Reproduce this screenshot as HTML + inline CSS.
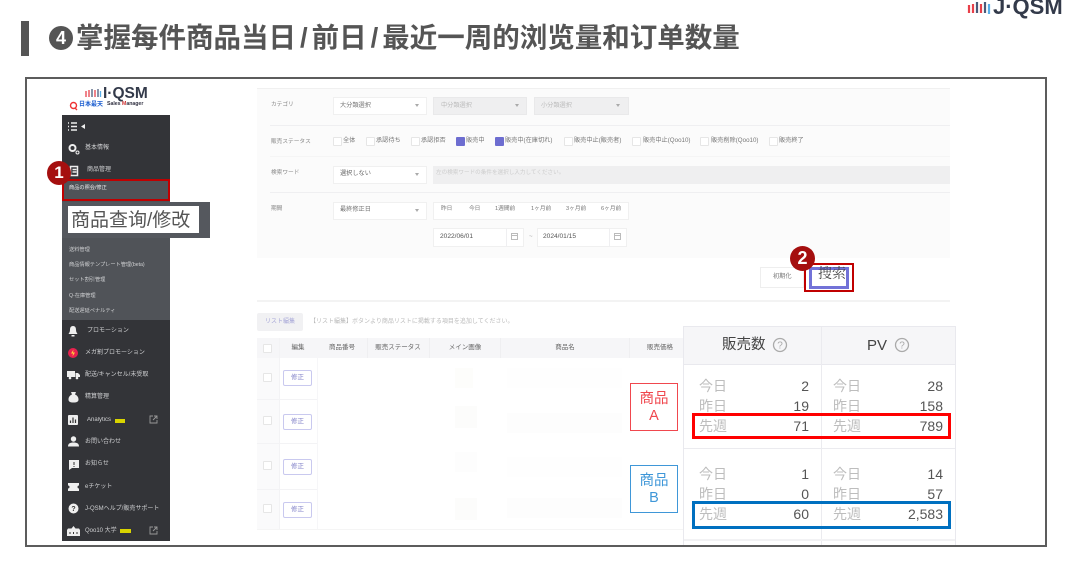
<!DOCTYPE html>
<html lang="ja"><head><meta charset="utf-8"><title>J-QSM</title>
<style>
html,body{margin:0;padding:0;background:#fff}
#p{position:relative;width:1080px;height:570px;overflow:hidden;background:#fff;font-family:"Liberation Sans","Noto Sans CJK JP",sans-serif}
#p div,#p span.a,#p svg{position:absolute}
.t{white-space:nowrap;line-height:1}
.s{font-size:6.200px;color:#777;filter:blur(.3px)}
.l{font-size:5.700px;color:#888;filter:blur(.3px)}
.m{font-size:6px;color:#cfd0d2;filter:blur(.3px)}
.m2{font-size:5.200px;color:#cfd0d2;filter:blur(.3px)}
.sel{background:#fff;border:1px solid #f0f0f0;box-sizing:border-box;height:18px}
.dis{background:#efeff0;border:1px solid #e9e9ea;box-sizing:border-box;height:18px}
.cb{width:7px;height:7px;background:#fff;border:1px solid #e6e6e6;border-radius:1px}
.cb.on{background:#6d6dd0;border-color:#6d6dd0}
.hd{font-size:6.500px;color:#666;filter:blur(.3px);transform:translateX(-50%)}
.edit{left:283px;width:29px;height:16px;box-sizing:border-box;border:1px solid #c9c9ef;background:#fff;border-radius:2px;text-align:center;font-size:6.500px;line-height:14px;color:#8080c8}
.lb{font-size:14px;color:#bdbdbd}
.n{font-size:14px;color:#555;text-align:right;width:60px}
.ln{background:#efeff1}
.sl{margin:0 4px}
</style></head><body><div id="p">

<div style="left:21px;top:21px;width:8px;height:35px;background:#555"></div>
<div style="left:49px;top:26px;width:24px;height:24px;border-radius:50%;background:#555;color:#fff;font:bold 18px/24px 'Liberation Sans';text-align:center">4</div>
<div class="t" style="left:76px;top:24px;font-size:27.500px;font-weight:bold;color:#555;font-family:'Liberation Sans','Noto Sans CJK SC',sans-serif">掌握每件商品当日<span class="sl">/</span>前日<span class="sl">/</span>最近一周的浏览量和订单数量</div>

<!-- top logo -->
<svg style="left:966px;top:0" width="26" height="16"><g stroke-width="2.200"><path d="M3 5v8" stroke="#e8404a"/><path d="M7 4v9" stroke="#e8404a"/><path d="M11 2v11" stroke="#4a5a78"/><path d="M15 4v9" stroke="#e8404a"/><path d="M19 2v11" stroke="#4a5a78"/><path d="M23 4v10" stroke="#58aee8"/></g></svg>
<div class="t" style="left:993px;top:-4px;font-size:22px;font-weight:bold;color:#333a4a">J·QSM</div>

<!-- frame -->
<div style="left:25px;top:77px;width:1018px;height:466px;border:2px solid #5c5c5c"></div>

<!-- sidebar logo -->
<svg style="left:84px;top:88px" width="18" height="10"><g stroke-width="1.300"><path d="M2 3v6" stroke="#e8404a"/><path d="M5 2v7" stroke="#e8404a"/><path d="M8 1v8" stroke="#4a5a78"/><path d="M11 2v7" stroke="#e8404a"/><path d="M14 1v8" stroke="#4a5a78"/><path d="M16.500 3v6" stroke="#58aee8"/></g></svg>
<div class="t" style="left:103px;top:86px;font-size:15.500px;font-weight:bold;color:#333a4a">I·QSM</div>
<svg style="left:69px;top:101px" width="10" height="10"><circle cx="4.500" cy="4.500" r="3" fill="none" stroke="#e33" stroke-width="1.400"/><path d="M6 7l2 2" stroke="#e33" stroke-width="1.300"/></svg>
<div class="t" style="left:79px;top:102px;font-size:6px;font-weight:bold;color:#1e5fd0">日本最天</div>
<div class="t" style="left:107px;top:102px;font-size:5.200px;font-weight:bold;color:#334">Sales <span style="color:#c33">M</span>anager</div>

<!-- sidebar -->
<div style="left:62px;top:115px;width:108px;height:426px;background:#333438"></div>
<div style="left:62px;top:180px;width:108px;height:140px;background:#505358"></div>
<svg style="left:67px;top:121px" width="20" height="12"><path d="M1 2h1M1 5.500h1M1 9h1M4 2h6M4 5.500h6M4 9h6" stroke="#eee" stroke-width="1.600"/><path d="M18 3v5l-4-2.500z" fill="#eee"/></svg>
<svg style="left:68px;top:143px" width="12" height="12"><circle cx="4.500" cy="5" r="3" fill="none" stroke="#eee" stroke-width="2"/><circle cx="9.500" cy="9.500" r="1.500" fill="none" stroke="#eee"/></svg>
<div class="t m" style="left:85px;top:145px">基本情報</div>
<svg style="left:69px;top:165px" width="11" height="12"><path d="M1.500 1.500h7v9h-7zM3.500 4.500h4M3.500 7h4" fill="none" stroke="#eee" stroke-width="1.500"/></svg>
<div class="t m" style="left:87px;top:167px">商品管理</div>
<div class="t m2" style="left:69px;top:186px;color:#e8e8ea">商品の照会/修正</div>
<div class="t m2" style="left:69px;top:248px">送料管理</div>
<div class="t m2" style="left:69px;top:263px">商品情報テンプレート管理(beta)</div>
<div class="t m2" style="left:69px;top:278px">セット割引管理</div>
<div class="t m2" style="left:69px;top:294px">Q-在庫管理</div>
<div class="t m2" style="left:69px;top:309px">配送遅延ペナルティ</div>

<svg style="left:68px;top:325px" width="10" height="12"><path d="M5 1c2.500 0 3 2 3 4s1 3 1.500 4h-9C1 8 2 7 2 5s.5-4 3-4z" fill="#eee"/><rect x="3.500" y="10" width="3" height="1.500" fill="#eee"/></svg>
<div class="t m" style="left:87px;top:328px">プロモーション</div>
<svg style="left:67px;top:347px" width="12" height="12"><circle cx="6" cy="6" r="5" fill="#e8214f"/><path d="M6.500 2.500L4 6.500h2l-.5 3L8 5.500H6z" fill="#ffd23a"/></svg>
<div class="t m" style="left:85px;top:350px">メガ割プロモーション</div>
<svg style="left:67px;top:370px" width="13" height="10"><path d="M0 1h8v6H0zM8.500 3H11l2 2v2H8.500z" fill="#eee"/><circle cx="3" cy="8" r="1.300" fill="#eee"/><circle cx="10" cy="8" r="1.300" fill="#eee"/></svg>
<div class="t m" style="left:85px;top:372px">配送/キャンセル/未受取</div>
<svg style="left:68px;top:391px" width="11" height="12"><path d="M3 1h5L7 3.500c2.500 1 3.500 3 3.500 5S9 11.500 5.500 11.500.500 10.500.500 8.500s1-4 3.500-5z" fill="#eee"/></svg>
<div class="t m" style="left:85px;top:394px">精算管理</div>
<svg style="left:68px;top:415px" width="10" height="10"><rect width="10" height="10" rx="1" fill="#eee"/><path d="M2.500 8V5.500M5 8V2.500M7.500 8V4.500" stroke="#333" stroke-width="1.200"/></svg>
<div class="t m" style="left:87px;top:417px">Analytics</div>
<div style="left:115px;top:419px;width:10px;height:4px;background:#d9d400"></div>
<svg style="left:149px;top:415px" width="9" height="9"><path d="M4 1H1v7h7V5M5 1h3v3M8 1L4 5" fill="none" stroke="#999" stroke-width=".9"/></svg>
<svg style="left:68px;top:436px" width="11" height="11"><circle cx="5.500" cy="3" r="2.700" fill="#eee"/><path d="M0 10.500C0 7.500 2 6.500 5.500 6.500s5.500 1 5.500 4z" fill="#eee"/></svg>
<div class="t m" style="left:85px;top:439px">お問い合わせ</div>
<svg style="left:69px;top:460px" width="10" height="10"><path d="M0 0h10v8H3L0 10z" fill="#eee"/><path d="M5 2v3M5 6v1" stroke="#333"/></svg>
<div class="t m" style="left:85px;top:461px">お知らせ</div>
<svg style="left:68px;top:483px" width="11" height="8"><path d="M0 0h11v2.500a1.500 1.500 0 0 0 0 3V8H0V5.500a1.500 1.500 0 0 0 0-3z" fill="#eee"/></svg>
<div class="t m" style="left:85px;top:484px">eチケット</div>
<svg style="left:68px;top:503px" width="11" height="11"><circle cx="5.500" cy="5.500" r="5" fill="#eee"/><text x="5.500" y="8" font-size="7" font-weight="bold" text-anchor="middle" fill="#333">?</text></svg>
<div class="t m" style="left:85px;top:506px">J-QSMヘルプ/販売サポート</div>
<svg style="left:67px;top:526px" width="13" height="10"><path d="M6.500 0l2 2.500H12l1 1.500v6H0V4l1-1.500h3.500z" fill="#eee"/><path d="M3 6v2M6.500 6v2M10 6v2" stroke="#333"/></svg>
<div class="t m" style="left:85px;top:528px">Qoo10 大学</div>
<div style="left:120px;top:529px;width:11px;height:4px;background:#d9d400"></div>
<svg style="left:149px;top:526px" width="9" height="9"><path d="M4 1H1v7h7V5M5 1h3v3M8 1L4 5" fill="none" stroke="#999" stroke-width=".9"/></svg>

<!-- red highlight + callout -->
<div style="left:62px;top:179px;width:108px;height:22px;box-sizing:border-box;border:2px solid #c00000"></div>
<div style="left:62px;top:202px;width:148px;height:36px;background:#55585e"></div>
<div style="left:68px;top:206px;width:131px;height:27px;background:#fff"></div>
<div class="t" style="left:71px;top:211px;font-size:19px;color:#555;font-family:'Liberation Sans','Noto Sans CJK SC',sans-serif">商品查询/修改</div>
<div style="left:47px;top:161px;width:24px;height:24px;border-radius:50%;background:#a50f0f;color:#fff;font:bold 17px/24px 'Liberation Sans';text-align:center">1</div>

<!-- filter panel -->
<div style="left:257px;top:88px;width:693px;height:170px;background:#fbfbfb;border-top:1px solid #f0f0f0;box-sizing:border-box"></div>
<div class="ln" style="left:270px;top:125px;width:680px;height:1px"></div>
<div class="ln" style="left:270px;top:156px;width:680px;height:1px;background:#f5f5f5"></div>
<div class="ln" style="left:270px;top:192px;width:680px;height:1px"></div>
<div class="t l" style="left:271px;top:103px">カテゴリ</div>
<div class="t l" style="left:271px;top:140px">販売ステータス</div>
<div class="t l" style="left:271px;top:171px">検索ワード</div>
<div class="t l" style="left:271px;top:207px">期間</div>

<div class="sel" style="left:333px;top:97px;width:94px"></div><div class="t s" style="left:340px;top:103px">大分類選択</div>
<div class="dis" style="left:433px;top:97px;width:94px"></div><div class="t s" style="left:441px;top:103px;color:#bbb">中分類選択</div>
<div class="dis" style="left:534px;top:97px;width:95px"></div><div class="t s" style="left:541px;top:103px;color:#bbb">小分類選択</div>
<svg style="left:415px;top:104px" width="220" height="4"><path d="M0 0h4L2 3zM100 0h4l-2 3zM201 0h4l-2 3z" fill="#aaa"/></svg>

<div class="cb" style="left:333px;top:137px"></div><div class="t s" style="left:343px;top:138px">全体</div>
<div class="cb" style="left:366px;top:137px"></div><div class="t s" style="left:376px;top:138px">承認待ち</div>
<div class="cb" style="left:411px;top:137px"></div><div class="t s" style="left:421px;top:138px">承認拒否</div>
<div class="cb on" style="left:456px;top:137px"></div><div class="t s" style="left:466px;top:138px">販売中</div>
<div class="cb on" style="left:495px;top:137px"></div><div class="t s" style="left:505px;top:138px">販売中(在庫切れ)</div>
<div class="cb" style="left:564px;top:137px"></div><div class="t s" style="left:574px;top:138px">販売中止(販売者)</div>
<div class="cb" style="left:632px;top:137px"></div><div class="t s" style="left:643px;top:138px">販売中止(Qoo10)</div>
<div class="cb" style="left:700px;top:137px"></div><div class="t s" style="left:711px;top:138px">販売削除(Qoo10)</div>
<div class="cb" style="left:769px;top:137px"></div><div class="t s" style="left:779px;top:138px">販売終了</div>

<div class="sel" style="left:333px;top:166px;width:94px"></div><div class="t s" style="left:340px;top:171px;color:#666">選択しない</div>
<svg style="left:415px;top:173px" width="5" height="4"><path d="M0 0h4L2 3z" fill="#aaa"/></svg>
<div class="dis" style="left:433px;top:166px;width:517px;border:0"></div><div class="t s" style="left:436px;top:171px;color:#ccc;font-size:5.600px">左の検索ワードの条件を選択し入力してください。</div>

<div class="sel" style="left:333px;top:202px;width:94px"></div><div class="t s" style="left:340px;top:207px">最終修正日</div>
<svg style="left:415px;top:209px" width="5" height="4"><path d="M0 0h4L2 3z" fill="#aaa"/></svg>
<div class="sel" style="left:433px;top:202px;width:196px"></div>
<div class="t s" style="left:441px;top:207px;font-size:5.700px">昨日</div><div class="t s" style="left:469px;top:207px;font-size:5.700px">今日</div><div class="t s" style="left:495px;top:207px;font-size:5.700px">1週間前</div><div class="t s" style="left:531px;top:207px;font-size:5.700px">1ヶ月前</div><div class="t s" style="left:566px;top:207px;font-size:5.700px">3ヶ月前</div><div class="t s" style="left:601px;top:207px;font-size:5.700px">6ヶ月前</div>
<div class="sel" style="left:433px;top:228px;width:91px;height:19px"></div><div class="t s" style="left:440px;top:234px;color:#555;font-size:6.600px">2022/06/01</div>
<div class="sel" style="left:537px;top:228px;width:90px;height:19px"></div><div class="t s" style="left:543px;top:234px;color:#555;font-size:6.600px">2024/01/15</div>
<div class="ln" style="left:506px;top:228px;width:1px;height:19px"></div><div class="ln" style="left:609px;top:228px;width:1px;height:19px"></div>
<svg style="left:511px;top:232px" width="112" height="9"><path d="M.500 1.500h6v6h-6zM.500 3.500h6M103.500 1.500h6v6h-6zM103.500 3.500h6" fill="none" stroke="#bbb"/></svg>
<div class="t s" style="left:529px;top:234px;color:#aaa">~</div>

<!-- buttons -->
<div style="left:257px;top:300px;width:693px;height:2px;background:#f3f3f3"></div>
<div style="left:760px;top:267px;width:44px;height:21px;background:#fff;border:1px solid #eee;box-sizing:border-box"></div>
<div class="t s" style="left:773px;top:274px">初期化</div>
<div style="left:804px;top:263px;width:50px;height:29px;box-sizing:border-box;border:2px solid #c00000;background:#fff"></div>
<div style="left:809px;top:267px;width:40px;height:22px;box-sizing:border-box;border:3px solid #7272d8;background:#fff"></div>
<div class="t" style="left:818px;top:268px;font-size:14px;color:#444;font-family:'Liberation Serif','Noto Serif CJK SC',serif">搜索</div>
<div style="left:790px;top:246px;width:25px;height:25px;border-radius:50%;background:#a50f0f;color:#fff;font:bold 18px/25px 'Liberation Sans';text-align:center">2</div>

<!-- list -->
<div style="left:257px;top:313px;width:46px;height:18px;background:#f1f1f3;border-radius:2px"></div>
<div class="t s" style="left:265px;top:319px;color:#a8a8d8;font-size:6px">リスト編集</div>
<div class="t s" style="left:310px;top:319px;color:#bbb;font-size:6px">【リスト編集】ボタンより商品リストに掲載する項目を追加してください。</div>

<div style="left:257px;top:338px;width:426px;height:20px;background:#f6f6f8"></div>
<div style="left:257px;top:358px;width:22px;height:171px;background:#fafafb"></div>
<div class="ln" style="left:279px;top:338px;width:1px;height:191px;background:#f3f3f5"></div>
<div class="ln" style="left:317px;top:338px;width:1px;height:191px;background:#f6f6f8"></div>
<div class="ln" style="left:367px;top:338px;width:1px;height:20px"></div>
<div class="ln" style="left:429px;top:338px;width:1px;height:20px"></div>
<div class="ln" style="left:500px;top:338px;width:1px;height:20px"></div>
<div class="ln" style="left:629px;top:338px;width:1px;height:20px"></div>
<div class="ln" style="left:257px;top:399px;width:60px;height:1px;background:#f3f3f5"></div>
<div class="ln" style="left:257px;top:443px;width:60px;height:1px;background:#f3f3f5"></div>
<div class="ln" style="left:257px;top:489px;width:60px;height:1px;background:#f3f3f5"></div>
<div class="ln" style="left:257px;top:529px;width:426px;height:1px;background:#f5f5f5"></div>
<div class="cb" style="left:263px;top:344px"></div>
<div class="t hd" style="left:298px;top:345px">編集</div>
<div class="t hd" style="left:342px;top:345px">商品番号</div>
<div class="t hd" style="left:398px;top:345px">販売ステータス</div>
<div class="t hd" style="left:465px;top:345px">メイン画像</div>
<div class="t hd" style="left:565px;top:345px">商品名</div>
<div class="t hd" style="left:660px;top:345px">販売価格</div>
<div class="cb" style="left:263px;top:373px"></div><div class="edit" style="top:370px">修正</div>
<div class="cb" style="left:263px;top:416px"></div><div class="edit" style="top:414px">修正</div>
<div class="cb" style="left:263px;top:461px"></div><div class="edit" style="top:459px">修正</div>
<div class="cb" style="left:263px;top:504px"></div><div class="edit" style="top:502px">修正</div>

<!-- faint rows -->
<div style="left:455px;top:368px;width:18px;height:20px;background:#fdfdfb"></div>
<div style="left:455px;top:406px;width:22px;height:22px;background:#fcfcfb"></div>
<div style="left:455px;top:452px;width:22px;height:20px;background:#fdfdfd"></div>
<div style="left:455px;top:498px;width:22px;height:22px;background:#fcfcfb"></div>
<div style="left:507px;top:368px;width:115px;height:20px;background:#fefefe"></div>
<div style="left:507px;top:413px;width:115px;height:20px;background:#fdfdfd"></div>
<div style="left:507px;top:457px;width:115px;height:20px;background:#fefefe"></div>
<div style="left:507px;top:498px;width:115px;height:20px;background:#fdfdfd"></div>

<!-- product labels -->
<div style="left:630px;top:383px;width:48px;height:48px;box-sizing:border-box;border:1px solid #f0474e;background:#fff;color:#f0474e;font-size:14.500px;line-height:17px;text-align:center;padding-top:7px">商品<br>A</div>
<div style="left:630px;top:465px;width:48px;height:48px;box-sizing:border-box;border:1px solid #3f97d8;background:#fff;color:#3f97d8;font-size:14.500px;line-height:17px;text-align:center;padding-top:7px">商品<br>B</div>

<!-- right panel -->
<div style="left:683px;top:326px;width:273px;height:219px;background:#fff;box-sizing:border-box;border:1px solid #e9e9ee;border-bottom:0"></div>
<div style="left:684px;top:327px;width:271px;height:37px;background:#f6f6f8;border-bottom:1px solid #e9e9ee"></div>
<div style="left:821px;top:327px;width:1px;height:218px;background:#ebebef"></div>
<div style="left:684px;top:448px;width:271px;height:1px;background:#ebebef"></div>
<div style="left:684px;top:539px;width:271px;height:2px;background:#f2f2f4"></div>
<div class="t" style="left:722px;top:338px;font-size:14.500px;color:#444">販売数</div>
<svg style="left:772px;top:337px" width="16" height="16"><circle cx="8" cy="8" r="6.500" fill="none" stroke="#aaa" stroke-width="1.300"/><text x="8" y="11.500" font-size="10" text-anchor="middle" fill="#aaa" font-family="Liberation Sans">?</text></svg>
<div class="t" style="left:867px;top:338px;font-size:15px;color:#444">PV</div>
<svg style="left:894px;top:337px" width="16" height="16"><circle cx="8" cy="8" r="6.500" fill="none" stroke="#aaa" stroke-width="1.300"/><text x="8" y="11.500" font-size="10" text-anchor="middle" fill="#aaa" font-family="Liberation Sans">?</text></svg>

<div class="t lb" style="left:699px;top:379px">今日</div><div class="t n" style="left:749px;top:379px">2</div>
<div class="t lb" style="left:699px;top:399px">昨日</div><div class="t n" style="left:749px;top:399px">19</div>
<div class="t lb" style="left:699px;top:419px">先週</div><div class="t n" style="left:749px;top:419px">71</div>
<div class="t lb" style="left:833px;top:379px">今日</div><div class="t n" style="left:883px;top:379px">28</div>
<div class="t lb" style="left:833px;top:399px">昨日</div><div class="t n" style="left:883px;top:399px">158</div>
<div class="t lb" style="left:833px;top:419px">先週</div><div class="t n" style="left:883px;top:419px">789</div>
<div class="t lb" style="left:699px;top:467px">今日</div><div class="t n" style="left:749px;top:467px">1</div>
<div class="t lb" style="left:699px;top:487px">昨日</div><div class="t n" style="left:749px;top:487px">0</div>
<div class="t lb" style="left:699px;top:507px">先週</div><div class="t n" style="left:749px;top:507px">60</div>
<div class="t lb" style="left:833px;top:467px">今日</div><div class="t n" style="left:883px;top:467px">14</div>
<div class="t lb" style="left:833px;top:487px">昨日</div><div class="t n" style="left:883px;top:487px">57</div>
<div class="t lb" style="left:833px;top:507px">先週</div><div class="t n" style="left:883px;top:507px">2,583</div>

<div style="left:692px;top:413px;width:259px;height:26px;box-sizing:border-box;border:3px solid #f00"></div>
<div style="left:692px;top:501px;width:259px;height:28px;box-sizing:border-box;border:3px solid #0070c0"></div>
</div></body></html>
